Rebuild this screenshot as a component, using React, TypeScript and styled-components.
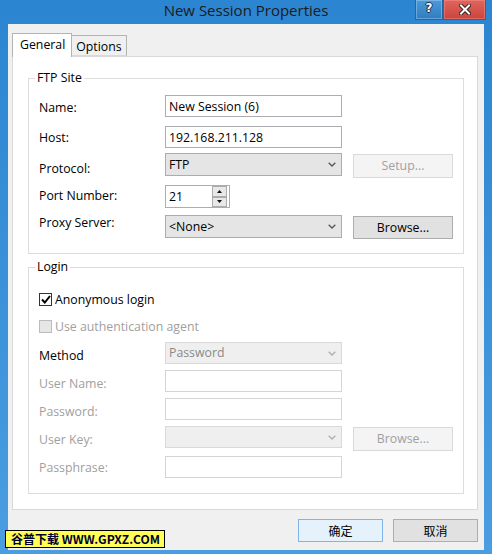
import React from "react";
import styled, { createGlobalStyle } from "styled-components";

const GlobalStyle = createGlobalStyle`
  html, body { margin: 0; padding: 0; background: #3a8fd6; }
  body {
    font-family: "Open Sans", "Noto Sans", "Noto Sans CJK SC", sans-serif;
    font-size: 12.3px;
    color: #000;
  }
`;

const Window = styled.div`
  position: relative;
  width: 492px;
  height: 554px;
  box-sizing: border-box;
  display: flex;
  flex-direction: column;
  overflow: hidden;
  background: linear-gradient(180deg, #2b85d0 0%, #3990d8 45%, #4a9de0 100%);
`;

const TitleBar = styled.div`
  height: 24px;
  flex: none;
  display: grid;
  grid-template-columns: 1fr auto 1fr;
  align-items: start;
`;

const Title = styled.div`
  grid-column: 2;
  font-size: 15px;
  line-height: 21px;
  color: #1b1b1b;
  white-space: nowrap;
`;

const CaptionButtons = styled.div`
  grid-column: 3;
  justify-self: end;
  display: flex;
  margin-right: 6px;
`;

const CaptionButton = styled.div<{ $close?: boolean }>`
  box-sizing: border-box;
  width: ${(p) => (p.$close ? 43 : 28)}px;
  height: 20px;
  display: flex;
  align-items: center;
  justify-content: center;
  border: 1px solid ${(p) => (p.$close ? "#a83a34" : "#2466a3")};
  border-top: none;
  background: ${(p) =>
    p.$close
      ? "linear-gradient(180deg, #e0665e 0%, #c9453d 100%)"
      : "linear-gradient(180deg, #4d9ad8 0%, #2f7cc0 100%)"};
  box-shadow: inset 0 0 0 1px ${(p) => (p.$close ? "rgba(255,170,160,0.35)" : "rgba(170,210,245,0.45)")};
`;

const HelpGlyph = styled.span`
  font-family: "DejaVu Sans", sans-serif;
  font-weight: bold;
  font-size: 12px;
  line-height: 12px;
  color: #fff;
  text-shadow: 0 0 1px #203040, 1px 0 0 #203040, -1px 0 0 #203040, 0 1px 0 #203040, 0 -1px 0 #203040;
  margin-top: -3px;
`;

const Client = styled.div`
  flex: 1;
  margin: 0 8px 4px 8px;
  background: #f0f0f0;
  display: flex;
  flex-direction: column;
  padding: 0 6px 0 4px;
`;

const TabStrip = styled.div`
  height: 32px;
  flex: none;
  display: flex;
  align-items: flex-end;
  position: relative;
  z-index: 1;
`;

const Tab = styled.div<{ $active?: boolean }>`
  box-sizing: border-box;
  height: ${(p) => (p.$active ? 24 : 21)}px;
  margin-bottom: ${(p) => (p.$active ? -1 : 0)}px;
  padding: ${(p) => (p.$active ? "2px 6px 0 7px" : "2px 4px 0 4px")};
  border: 1px solid #b4b4b4;
  border-bottom: ${(p) => (p.$active ? "none" : "1px solid #d9d9d9")};
  border-left: ${(p) => (p.$active ? "1px solid #b4b4b4" : "none")};
  background: ${(p) => (p.$active ? "#fff" : "#f0f0f0")};
  line-height: 17px;
  white-space: nowrap;
`;

const Panel = styled.div`
  box-sizing: border-box;
  height: 454px;
  flex: none;
  border: 1px solid #d9d9d9;
  background: #fff;
  padding: 13px 13px 0 15px;
  display: flex;
  flex-direction: column;
`;

const Group = styled.fieldset<{ $mt?: number }>`
  margin: ${(p) => p.$mt ?? 0}px 0 0 0;
  padding: 0;
  border: 1px solid #dcdcdc;
  min-width: 0;
`;

const Legend = styled.legend`
  margin-left: 6px;
  padding: 0 2px;
  line-height: 16px;
`;

const GroupBody = styled.div<{ $pt: number; $pb: number }>`
  padding: ${(p) => p.$pt}px 0 ${(p) => p.$pb}px 10px;
  display: flex;
  flex-direction: column;
`;

const Row = styled.div<{ $mt?: number; $h: number }>`
  display: flex;
  align-items: flex-start;
  height: ${(p) => p.$h}px;
  margin-top: ${(p) => p.$mt ?? 0}px;
`;

const Label = styled.div<{ $dy?: number; $disabled?: boolean }>`
  width: 126px;
  flex: none;
  line-height: 16px;
  margin-top: ${(p) => p.$dy ?? 0}px;
  color: ${(p) => (p.$disabled ? "#a0a0a0" : "#000")};
  white-space: nowrap;
`;

const TextBox = styled.input<{ $w?: number; $h?: number; $disabled?: boolean }>`
  box-sizing: border-box;
  width: ${(p) => p.$w ?? 177}px;
  height: ${(p) => p.$h ?? 22}px;
  margin: 0;
  padding: 0 3px;
  border: 1px solid ${(p) => (p.$disabled ? "#d5d5d5" : "#abadb3")};
  background: #fff;
  font: inherit;
  color: #000;
  outline: none;
`;

const PortBox = styled.div`
  box-sizing: border-box;
  width: 65px;
  height: 23px;
  border: 1px solid #abadb3;
  background: #fff;
  display: flex;
  align-items: center;
  padding: 0 1px 0 3px;
`;

const PortText = styled.span`
  flex: 1;
  line-height: 16px;
`;

const Spinner = styled.div`
  width: 15px;
  height: 21px;
  display: flex;
  flex-direction: column;
  margin-right: 1px;
`;

const SpinButton = styled.div`
  box-sizing: border-box;
  flex: 1;
  border: 1px solid #acacac;
  background: #e8e8e8;
  display: flex;
  align-items: center;
  justify-content: center;
`;

const Combo = styled.div<{ $h?: number; $disabled?: boolean }>`
  box-sizing: border-box;
  width: 177px;
  height: ${(p) => p.$h ?? 22}px;
  border: 1px solid ${(p) => (p.$disabled ? "#d9d9d9" : "#acacac")};
  background: ${(p) => (p.$disabled ? "#efefef" : "#e5e5e5")};
  display: flex;
  align-items: center;
  padding: 0 5px 0 3px;
  color: ${(p) => (p.$disabled ? "#8a8a8a" : "#000")};
`;

const ComboText = styled.span`
  flex: 1;
  line-height: 16px;
  white-space: nowrap;
`;

const Button = styled.div<{ $disabled?: boolean; $h?: number; $mt?: number }>`
  box-sizing: border-box;
  width: 100px;
  height: ${(p) => p.$h ?? 24}px;
  margin-left: 11px;
  margin-top: ${(p) => p.$mt ?? 0}px;
  border: 1px solid ${(p) => (p.$disabled ? "#d9d9d9" : "#adadad")};
  background: ${(p) => (p.$disabled ? "#f4f4f4" : "#e1e1e1")};
  color: ${(p) => (p.$disabled ? "#a0a0a0" : "#000")};
  display: flex;
  align-items: center;
  justify-content: center;
  line-height: 16px;
`;

const CheckRow = styled.div<{ $mt?: number; $disabled?: boolean }>`
  display: flex;
  align-items: center;
  height: 16px;
  margin-top: ${(p) => p.$mt ?? 0}px;
  color: ${(p) => (p.$disabled ? "#a0a0a0" : "#000")};
  white-space: nowrap;
`;

const CheckBox = styled.span<{ $disabled?: boolean }>`
  box-sizing: border-box;
  width: 13px;
  height: 13px;
  margin-right: 3px;
  border: 1px solid ${(p) => (p.$disabled ? "#bcbcbc" : "#333")};
  background: ${(p) => (p.$disabled ? "#e6e6e6" : "#fff")};
  display: flex;
  align-items: center;
  justify-content: center;
`;

const Footer = styled.div`
  display: flex;
  justify-content: flex-end;
  gap: 10px;
  margin-top: 9px;
`;

const DialogButton = styled.div<{ $default?: boolean }>`
  box-sizing: border-box;
  width: 85px;
  height: 23px;
  border: 1px solid ${(p) => (p.$default ? "#7eb4ea" : "#adadad")};
  background: ${(p) => (p.$default ? "#e5f1fb" : "#e1e1e1")};
  display: flex;
  align-items: center;
  justify-content: center;
  font-family: "Noto Sans CJK SC", sans-serif;
  font-size: 12px;
  line-height: 16px;
`;

const Watermark = styled.div`
  position: absolute;
  left: 5px;
  top: 530px;
  box-sizing: border-box;
  width: 160px;
  height: 18px;
  border: 1px solid #000;
  background: #ffff55;
  color: #000030;
  font-family: "Noto Sans CJK SC", sans-serif;
  font-weight: bold;
  font-size: 12px;
  line-height: 16px;
  padding-left: 5px;
  white-space: nowrap;
`;

const Chevron = ({ color }: { color: string }) => (
  <svg width="8" height="5" viewBox="0 0 8 5">
    <polyline points="0.7,0.7 4,4 7.3,0.7" fill="none" stroke={color} strokeWidth="1.4" />
  </svg>
);

const Tri = ({ up }: { up?: boolean }) => (
  <svg width="5" height="3" viewBox="0 0 5 3">
    <polygon points={up ? "0,3 5,3 2.5,0" : "0,0 5,0 2.5,3"} fill="#111" />
  </svg>
);

const CloseGlyph = () => (
  <svg width="12" height="11" viewBox="0 0 12 11">
    <path d="M2 1.5 L10 9.5 M10 1.5 L2 9.5" stroke="#3a2020" strokeWidth="4" strokeLinecap="square" />
    <path d="M2 1.5 L10 9.5 M10 1.5 L2 9.5" stroke="#fff" strokeWidth="2" strokeLinecap="square" />
  </svg>
);

const Check = () => (
  <svg width="10" height="9" viewBox="0 0 10 9">
    <polyline points="1,4.5 3.8,7.5 9,1" fill="none" stroke="#000" strokeWidth="2" />
  </svg>
);

export default function App() {
  return (
    <>
      <GlobalStyle />
      <Window>
        <TitleBar>
          <Title>New Session Properties</Title>
          <CaptionButtons>
            <CaptionButton>
              <HelpGlyph>?</HelpGlyph>
            </CaptionButton>
            <CaptionButton $close>
              <CloseGlyph />
            </CaptionButton>
          </CaptionButtons>
        </TitleBar>
        <Client>
          <TabStrip>
            <Tab $active>General</Tab>
            <Tab>Options</Tab>
          </TabStrip>
          <Panel>
            <Group>
              <Legend>FTP Site</Legend>
              <GroupBody $pt={9} $pb={14}>
                <Row $h={22}>
                  <Label $dy={5}>Name:</Label>
                  <TextBox readOnly value="New Session (6)" />
                </Row>
                <Row $h={22} $mt={9}>
                  <Label $dy={4}>Host:</Label>
                  <TextBox readOnly value="192.168.211.128" />
                </Row>
                <Row $h={25} $mt={5}>
                  <Label $dy={8}>Protocol:</Label>
                  <Combo $h={23}>
                    <ComboText>FTP</ComboText>
                    <Chevron color="#5a5a5a" />
                  </Combo>
                  <Button $disabled $mt={1}>Setup...</Button>
                </Row>
                <Row $h={23} $mt={7}>
                  <Label $dy={3}>Port Number:</Label>
                  <PortBox>
                    <PortText>21</PortText>
                    <Spinner>
                      <SpinButton><Tri up /></SpinButton>
                      <SpinButton><Tri /></SpinButton>
                    </Spinner>
                  </PortBox>
                </Row>
                <Row $h={24} $mt={7}>
                  <Label $dy={0}>Proxy Server:</Label>
                  <Combo $h={23}>
                    <ComboText>&lt;None&gt;</ComboText>
                    <Chevron color="#5a5a5a" />
                  </Combo>
                  <Button $mt={1} $h={23}>Browse...</Button>
                </Row>
              </GroupBody>
            </Group>
            <Group $mt={5}>
              <Legend>Login</Legend>
              <GroupBody $pt={16} $pb={15}>
                <CheckRow>
                  <CheckBox><Check /></CheckBox>
                  Anonymous login
                </CheckRow>
                <CheckRow $mt={11} $disabled>
                  <CheckBox $disabled />
                  Use authentication agent
                </CheckRow>
                <Row $h={22} $mt={8}>
                  <Label $dy={6}>Method</Label>
                  <Combo $disabled>
                    <ComboText>Password</ComboText>
                    <Chevron color="#b0b0b0" />
                  </Combo>
                </Row>
                <Row $h={22} $mt={6}>
                  <Label $dy={6} $disabled>User Name:</Label>
                  <TextBox readOnly $disabled value="" />
                </Row>
                <Row $h={22} $mt={6}>
                  <Label $dy={6} $disabled>Password:</Label>
                  <TextBox readOnly $disabled value="" />
                </Row>
                <Row $h={25} $mt={6}>
                  <Label $dy={6} $disabled>User Key:</Label>
                  <Combo $disabled>
                    <ComboText />
                    <Chevron color="#b0b0b0" />
                  </Combo>
                  <Button $disabled $mt={1}>Browse...</Button>
                </Row>
                <Row $h={22} $mt={5}>
                  <Label $dy={4} $disabled>Passphrase:</Label>
                  <TextBox readOnly $disabled value="" />
                </Row>
              </GroupBody>
            </Group>
          </Panel>
          <Footer>
            <DialogButton $default>确定</DialogButton>
            <DialogButton>取消</DialogButton>
          </Footer>
        </Client>
        <Watermark>谷普下载 WWW.GPXZ.COM</Watermark>
      </Window>
    </>
  );
}
